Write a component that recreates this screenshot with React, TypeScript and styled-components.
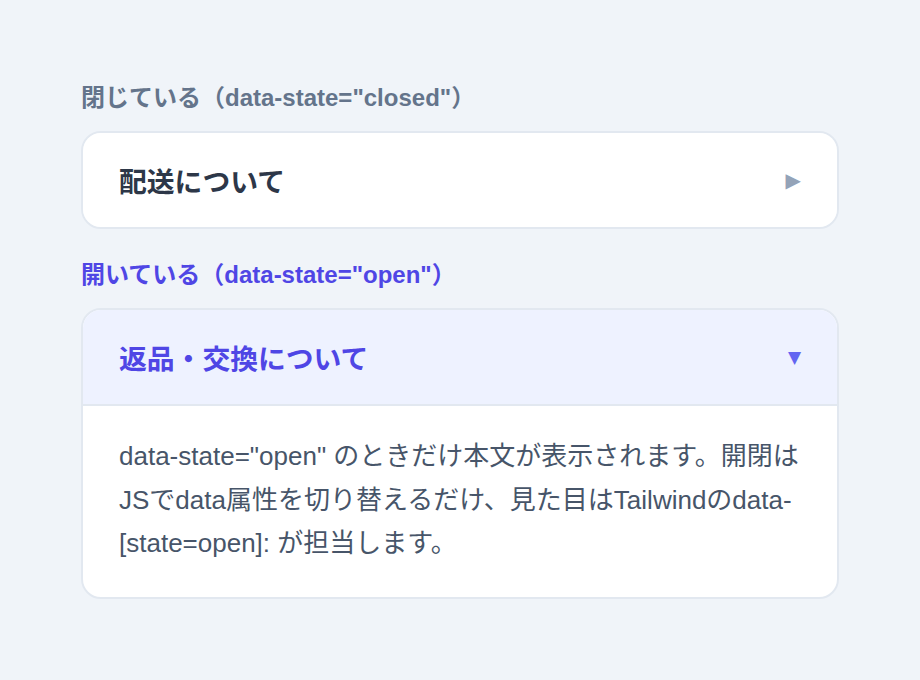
import styled, { createGlobalStyle } from "styled-components";

const GlobalStyle = createGlobalStyle`
  html, body {
    margin: 0;
    padding: 0;
    background: #f0f4f9;
  }
  body {
    font-family: "Liberation Sans", "Noto Sans CJK JP", sans-serif;
  }
`;

const Page = styled.div`
  width: 920px;
  min-height: 680px;
  box-sizing: border-box;
  padding: 82px 81px 0;
  display: flex;
  flex-direction: column;
  gap: 30px;
`;

const Section = styled.section`
  display: flex;
  flex-direction: column;
  gap: 17px;
`;

const Label = styled.div<{ $open?: boolean }>`
  font-size: 24px;
  line-height: 32px;
  font-weight: 700;
  color: ${(p) => (p.$open ? "#4f46e5" : "#64748b")};
`;

const Card = styled.div`
  background: #ffffff;
  border: 2px solid #e2e8f0;
  border-radius: 20px;
  overflow: hidden;
`;

const Header = styled.div<{ $open?: boolean }>`
  height: 94px;
  display: flex;
  align-items: center;
  justify-content: space-between;
  padding: 0 36px;
  background: ${(p) => (p.$open ? "#eef2ff" : "#ffffff")};
  border-bottom: ${(p) => (p.$open ? "2px solid #e2e8f0" : "none")};
`;

const Title = styled.h3<{ $open?: boolean }>`
  margin: 0;
  font-size: 27.8px;
  font-weight: 700;
  color: ${(p) => (p.$open ? "#4f46e5" : "#2d3748")};
`;

const Arrow = styled.span<{ $open?: boolean }>`
  font-family: "DejaVu Sans", sans-serif;
  font-size: ${(p) => (p.$open ? "17px" : "20px")};
  line-height: 1;
  color: ${(p) => (p.$open ? "#6366f1" : "#94a3b8")};
`;

const Body = styled.div`
  padding: 29px 36px 31px;
  font-size: 26px;
  line-height: 43.5px;
  color: #475569;
`;

function App() {
  return (
    <>
      <GlobalStyle />
      <Page>
        <Section>
          <Label>閉じている（data-state="closed"）</Label>
          <Card data-state="closed">
            <Header>
              <Title>配送について</Title>
              <Arrow>▶</Arrow>
            </Header>
          </Card>
        </Section>
        <Section>
          <Label $open>開いている（data-state="open"）</Label>
          <Card data-state="open">
            <Header $open>
              <Title $open>返品・交換について</Title>
              <Arrow $open>▼</Arrow>
            </Header>
            <Body>
              data-state="open" のときだけ本文が表示されます。開閉はJSでdata属性を切り替えるだけ、見た目はTailwindのdata-[state=open]: が担当します。
            </Body>
          </Card>
        </Section>
      </Page>
    </>
  );
}

export default App;
